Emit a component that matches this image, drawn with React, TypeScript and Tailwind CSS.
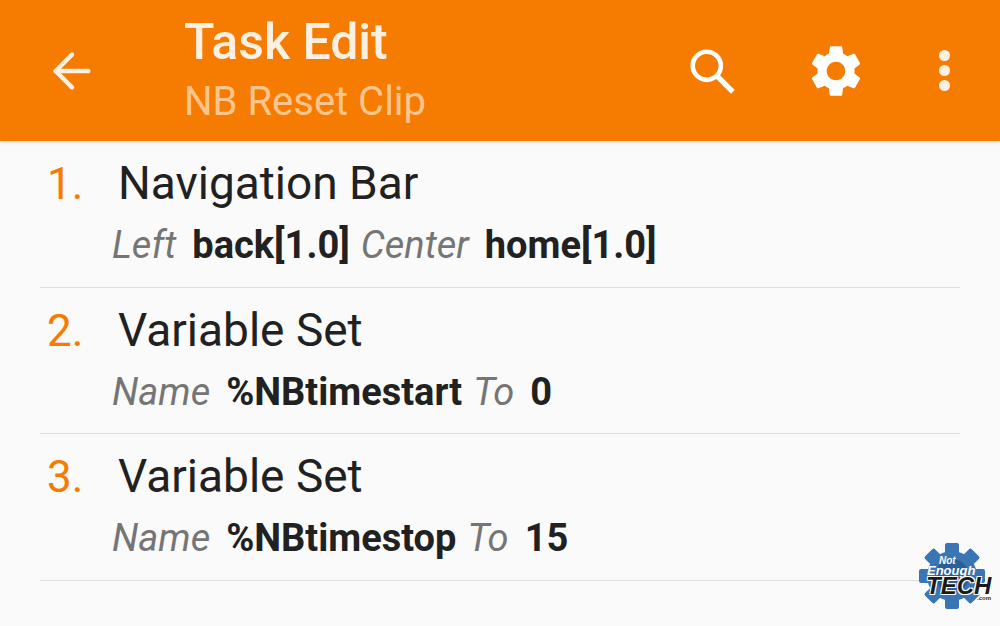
import { ArrowLeft } from 'lucide-react';

const rows = [
  { n: '1.', title: 'Navigation Bar', args: [['Left', 'back[1.0]'], ['Center', 'home[1.0]']] },
  { n: '2.', title: 'Variable Set', args: [['Name', '%NBtimestart'], ['To', '0']] },
  { n: '3.', title: 'Variable Set', args: [['Name', '%NBtimestop'], ['To', '15']] },
];

const GEAR = 'M19.14 12.94c.04-.3.06-.61.06-.94 0-.32-.02-.64-.07-.94l2.03-1.58c.18-.14.23-.41.12-.61l-1.92-3.32c-.12-.22-.37-.29-.59-.22l-2.39.96c-.5-.38-1.03-.7-1.62-.94l-.36-2.54c-.04-.24-.24-.41-.48-.41h-3.84c-.24 0-.43.17-.47.41l-.36 2.54c-.59.24-1.13.57-1.62.94l-2.39-.96c-.22-.08-.47 0-.59.22L2.74 8.87c-.12.21-.08.47.12.61l2.03 1.58c-.05.3-.09.63-.09.94s.02.64.07.94l-2.03 1.58c-.18.14-.23.41-.12.61l1.92 3.32c.12.22.37.29.59.22l2.39-.96c.5.38 1.03.7 1.62.94l.36 2.54c.05.24.24.41.48.41h3.84c.24 0 .44-.17.47-.41l.36-2.54c.59-.24 1.13-.56 1.62-.94l2.39.96c.22.08.47 0 .59-.22l1.92-3.32c.12-.22.07-.47-.12-.61l-2.01-1.58zM12 15.6c-1.98 0-3.6-1.62-3.6-3.6s1.62-3.6 3.6-3.6 3.6 1.62 3.6 3.6-1.62 3.6-3.6 3.6z';

const Logo = () => (
  <div className="absolute left-[912px] top-[541px] w-[82px] h-[68px]">
    <svg viewBox="0 0 68 68" className="absolute left-[6px] top-[1px] w-[68px] h-[68px]">
      {[0, 45, 90, 135, 180, 225, 270, 315].map((a) => (
        <rect key={a} x="27" y="1" width="14" height="14" rx="2" fill="#3a76b4" transform={`rotate(${a} 34 34)`} />
      ))}
      <circle cx="34" cy="34" r="25" fill="#3a76b4" />
      <circle cx="34" cy="34" r="17" fill="#2c5f96" />
    </svg>
    <div className="absolute left-[27px] top-[15px] text-[10px] leading-[9px] font-bold italic text-white font-['Liberation_Sans',sans-serif]">
      Not
    </div>
    <div className="absolute left-[15px] top-[24px] text-[13px] leading-[11px] font-bold italic text-white font-['Liberation_Sans',sans-serif]">
      Enough
    </div>
    <div className="absolute left-[14px] top-[35px] text-[24px] leading-[19px] font-bold italic text-[#1a1a1a] [text-shadow:1px_1px_0_#fff,-1px_-1px_0_#fff,1px_-1px_0_#fff,-1px_1px_0_#fff] font-['Liberation_Sans',sans-serif]">
      TECH
    </div>
    <div className="absolute left-[65px] top-[55px] text-[6px] leading-[5px] font-bold text-[#333] font-['Liberation_Sans',sans-serif]">
      .com
    </div>
  </div>
);

export default function App() {
  return (
    <div className="relative w-[1000px] h-[626px] overflow-hidden bg-[#fafafa] font-['Roboto',sans-serif]">
      <header className="flex items-center h-[141px] bg-[#f57c00] shadow-[0_1px_4px_rgba(0,0,0,0.15)]">
        <ArrowLeft className="ml-[44px] w-[56px] h-[56px] text-[#fdf0e2]" strokeWidth={1.9} />
        <div className="ml-[84px] flex flex-col">
          <span className="text-[50px] leading-[56px] font-medium text-[#fdf0e2] mt-[-4px]">Task Edit</span>
          <span className="text-[40px] leading-[44px] text-[#fcc58e] mt-[10px]">NB Reset Clip</span>
        </div>
        <div className="ml-auto flex items-center">
          <svg viewBox="0 0 48 48" className="w-[50px] h-[50px] text-white" fill="none" stroke="currentColor" strokeWidth="4.4">
            <circle cx="19" cy="19" r="13.5" />
            <path d="M29 29l15 15" strokeWidth="5" />
          </svg>
          <svg viewBox="0 0 24 24" className="ml-[68px] w-[62px] h-[62px] text-white" fill="currentColor">
            <path d={GEAR} />
          </svg>
          <div className="ml-[72px] mr-[50px] flex flex-col gap-[4px]">
            <span className="w-[11px] h-[11px] rounded-full bg-[#fdf0e2]" />
            <span className="w-[11px] h-[11px] rounded-full bg-[#fdf0e2]" />
            <span className="w-[11px] h-[11px] rounded-full bg-[#fdf0e2]" />
          </div>
        </div>
      </header>
      <div className="mx-[40px] flex flex-col">
        {rows.map((r) => (
          <div key={r.n} className="h-[146.5px] border-b border-[#dddddd] relative">
            <div className="flex items-baseline h-[84px] pt-[10px]">
              <span className="w-[78px] pl-[7px] text-[44px] leading-[64px] text-[#f57c00]">{r.n}</span>
              <span className="text-[46px] leading-[64px] text-[#212121]">{r.title}</span>
            </div>
            <div className="flex items-baseline pl-[72px] text-[38px] leading-[44px] mt-[-2px]">
              <span className="italic text-[#757575]">{r.args[0][0]}</span>
              <span className="ml-[16px] font-bold text-[#212121]">{r.args[0][1]}</span>
              <span className="ml-[11px] italic text-[#757575]">{r.args[1][0]}</span>
              <span className="ml-[16px] font-bold text-[#212121]">{r.args[1][1]}</span>
            </div>
          </div>
        ))}
      </div>
      <Logo />
    </div>
  );
}
